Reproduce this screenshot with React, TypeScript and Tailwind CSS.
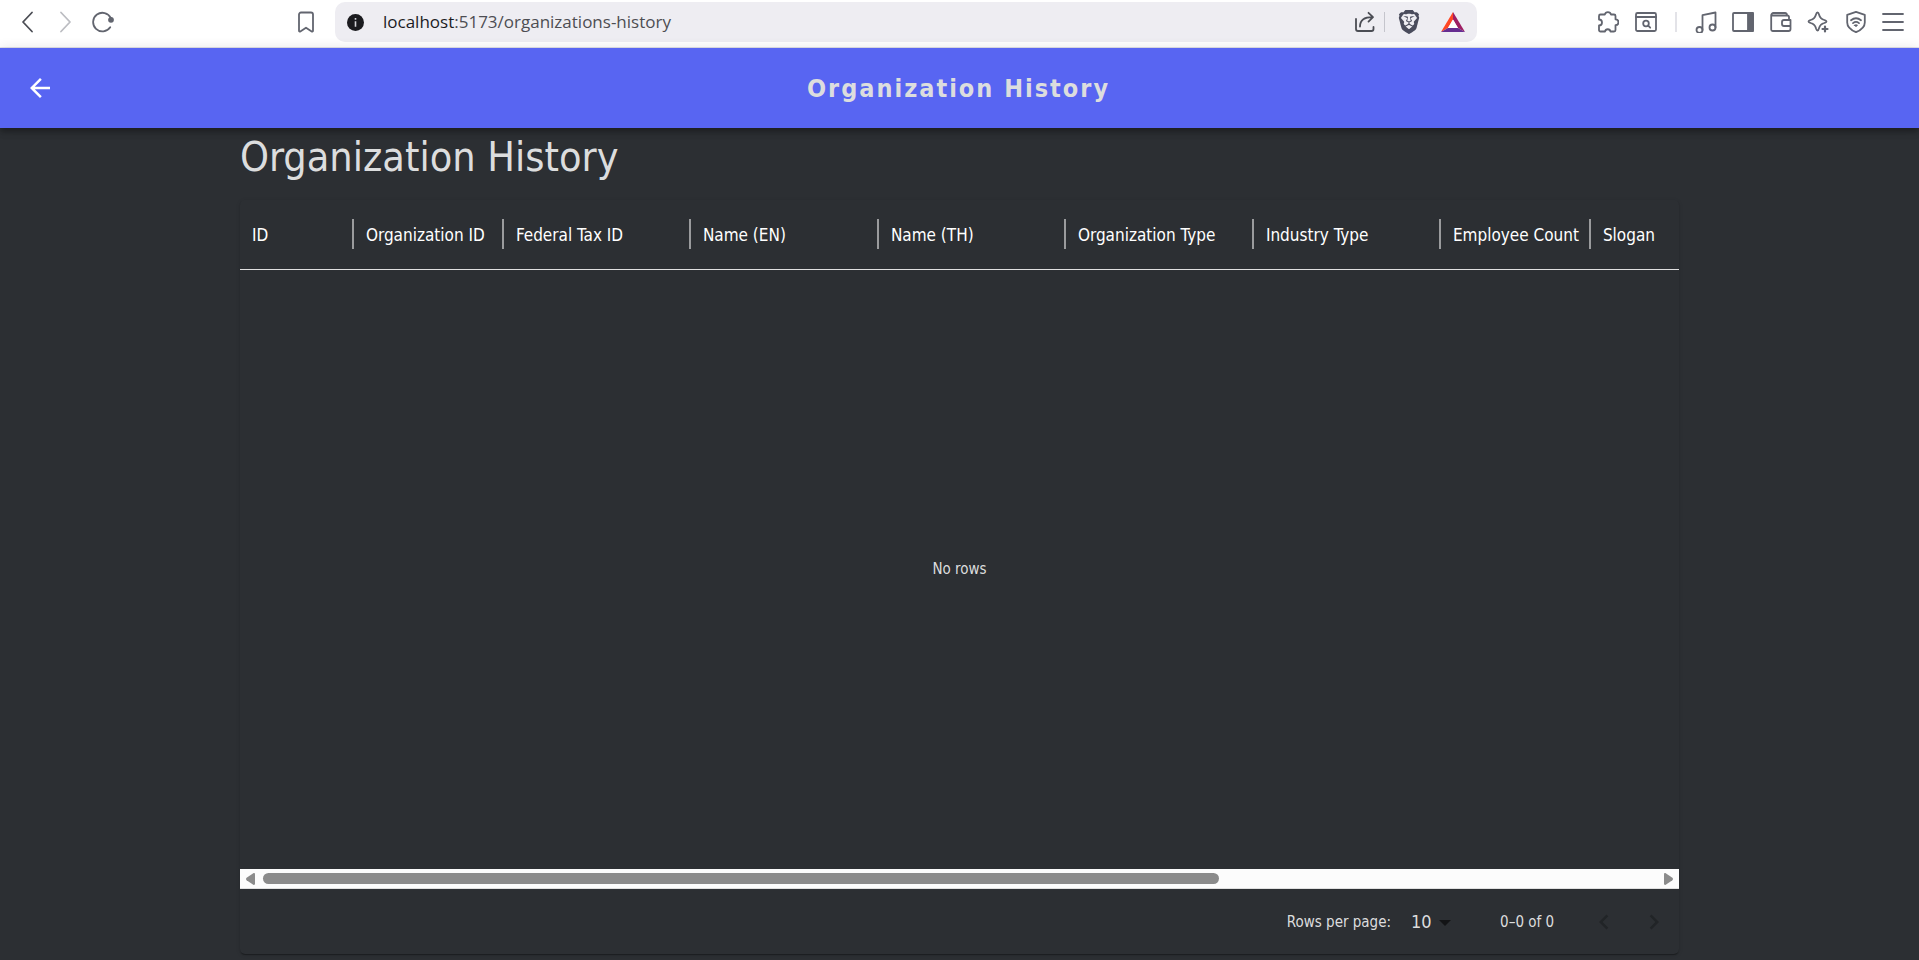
import type { ReactNode } from "react";
import { SiBrave } from "react-icons/si";

const columns = [
  { label: "ID", width: "w-[114px]" },
  { label: "Organization ID", width: "w-[150px]" },
  { label: "Federal Tax ID", width: "w-[187px]" },
  { label: "Name (EN)", width: "w-[188px]" },
  { label: "Name (TH)", width: "w-[187px]" },
  { label: "Organization Type", width: "w-[188px]" },
  { label: "Industry Type", width: "w-[187px]" },
  { label: "Employee Count", width: "w-[150px]" },
  { label: "Slogan", width: "w-auto" },
];

function Line({ children, size = 22 }: { children: ReactNode; size?: number }) {
  return (
    <svg
      width={size}
      height={size}
      viewBox={`0 0 ${size} ${size}`}
      fill="none"
      stroke="currentColor"
      strokeWidth="1.8"
      strokeLinecap="round"
      strokeLinejoin="round"
      aria-hidden="true"
    >
      {children}
    </svg>
  );
}

function IconButton({ label, children }: { label: string; children: ReactNode }) {
  return (
    <button type="button" aria-label={label} className="flex shrink-0 items-center justify-center">
      {children}
    </button>
  );
}

function BrowserBar() {
  return (
    <div className="flex h-12 items-center border-b border-[#e3e3ea] bg-white pr-[15px] pb-[3px] text-[#62656f]">
      <div className="flex w-[335px] shrink-0 items-center gap-4 pl-4">
        <span className="flex text-[#4b4d54]">
          <IconButton label="Back">
            <Line>
              <path d="M16 1.5 7 11l9 9.5" />
            </Line>
          </IconButton>
        </span>
        <span className="flex text-[#bcbdc2]">
          <IconButton label="Forward">
            <Line>
              <path d="m7 1.5 9 9.5-9 9.5" />
            </Line>
          </IconButton>
        </span>
        <IconButton label="Reload">
          <Line>
            <path d="M18.2 16.2A9.3 9.3 0 1 1 18.8 7" />
            <circle cx="19" cy="8.8" r="2" fill="currentColor" />
          </Line>
        </IconButton>
        <span className="ml-auto flex pr-[18px]">
          <IconButton label="Bookmark this page">
            <Line>
              <path d="M4 3.5A2 2 0 0 1 6 1.5h10a2 2 0 0 1 2 2v16.2c0 .8-.7 1.1-1.3.7L11 16.7l-5.7 3.7c-.6.4-1.3.1-1.3-.7z" />
            </Line>
          </IconButton>
        </span>
      </div>

      <div className="flex h-10 min-w-0 flex-1 items-center rounded-[10px] bg-[#eeedf2] px-3">
        <svg width="17" height="17" viewBox="0 0 17 17" className="shrink-0" aria-hidden="true">
          <circle cx="8.5" cy="8.5" r="8.5" fill="#1b1b1f" />
          <path d="M8.5 4v1.7M8.5 7.2v5.6" stroke="#d5d5da" strokeWidth="1.6" />
        </svg>
        <a
          href="#organizations-history"
          className="ml-[19px] min-w-0 flex-1 truncate font-['Open_Sans','Noto_Sans',sans-serif] text-[17px] leading-6 text-[#4d4d52]"
        >
          <span className="text-[#1b1b1f]">localhost</span>:5173/organizations-history
        </a>
        <div className="flex shrink-0 items-center">
          <span className="flex text-[#4b4d54]">
            <IconButton label="Share">
              <Line>
                <path d="M2 8v10a2 2 0 0 0 2 2h13.500a2 2 0 0 0 2-2v-2" />
                <path d="M6 15.500C6 9 10 6.200 18.500 6.200M14.500 1.800l4.500 4.400-4.500 4.400" />
              </Line>
            </IconButton>
          </span>
          <span className="mr-3 ml-2 h-5 w-px bg-[#c5c5cc]" />
          <IconButton label="Brave Shields">
            <SiBrave size={24} className="text-[#4a4c5c]" />
          </IconButton>
          <span className="ml-5 flex">
            <IconButton label="Brave Rewards">
              <svg width="24" height="20" viewBox="0 0 24 20" aria-hidden="true">
                <path d="M12 0 0 20l7-4 5-8.500z" fill="#ff4724" />
                <path d="m12 0 12 20-7-4-5-8.500z" fill="#9e1f63" />
                <path d="M0 20h24l-7-4H7z" fill="#662d91" />
                <path d="m12 7.500 5 8.500H7z" fill="#fff" />
              </svg>
            </IconButton>
          </span>
        </div>
      </div>

      <div className="flex w-[427px] shrink-0 items-center justify-end">
        <div className="flex items-center gap-4">
          <IconButton label="Extensions">
            <Line>
              <path d="M3.500 3.500h4.300a3.200 3.200 0 0 1 6.200 0h3A1.500 1.500 0 0 1 18.500 5v3.300a2.900 2.900 0 0 1 0 5.900V19a1.500 1.500 0 0 1-1.500 1.500h-3.500a2.800 2.800 0 0 0-5.500 0H3.500A1.500 1.500 0 0 1 2 19v-4.500a3 3 0 0 0 0-6V5a1.500 1.500 0 0 1 1.500-1.500z" />
            </Line>
          </IconButton>
          <IconButton label="Search tabs">
            <Line>
              <rect x="1" y="2" width="20" height="18" rx="1.500" />
              <path d="M1 6h20" />
              <circle cx="11" cy="12.500" r="2.800" />
              <path d="m13.200 14.700 2 2" />
            </Line>
          </IconButton>
        </div>
        <span className="mr-[18px] ml-[18px] h-5 w-[2px] bg-[#e3e3e8]" />
        <div className="flex w-[209px] items-center justify-between">
          <IconButton label="Playlist">
            <Line>
              <circle cx="4.500" cy="19" r="3" />
              <circle cx="17.500" cy="16.500" r="3" />
              <path d="M7.500 19V4.200l13-2.700v15" />
            </Line>
          </IconButton>
          <IconButton label="Sidebar">
            <Line>
              <rect x="1" y="2" width="20" height="18" rx="1" />
              <path d="M16 2h5v18h-5z" fill="currentColor" />
            </Line>
          </IconButton>
          <IconButton label="Wallet">
            <Line>
              <path d="M19 9V6a1.500 1.500 0 0 0-1.500-1.500H1.200M1.200 4.500v14A1.500 1.500 0 0 0 2.700 20h15.800a2 2 0 0 0 2-2V9H14a2 2 0 0 0-2 2v2a2 2 0 0 0 2 2h6.500M1.200 4.500A2.300 2.300 0 0 1 3.500 2H15a2 2 0 0 1 2 2.300" />
            </Line>
          </IconButton>
          <IconButton label="Assistant">
            <Line>
              <path d="M10.500 1.500c1 0 1.200.8 1.500 2 .9 3.300 2 4.600 5.300 5.500 1.300.4 2.200.6 2.200 1.500s-1 1.100-2.200 1.500c-3.300.9-4.400 2-5.300 5.300-.3 1.300-.6 2.200-1.500 2.200s-1.100-1-1.500-2.200c-.9-3.300-2-4.400-5.300-5.300-1.200-.4-2.200-.6-2.200-1.500s1-1.100 2.200-1.500C7 8.100 8.100 6.800 9 3.500c.3-1.200.5-2 1.500-2z" />
              <path d="M15 15h6v6h-6z" fill="#fff" stroke="#fff" strokeWidth="1" />
              <path d="M18 15.500v5M15.500 18h5" strokeWidth="2.200" />
            </Line>
          </IconButton>
          <IconButton label="VPN">
            <Line>
              <path d="m11 .9 8.800 3v7.600c0 4.500-4 7.700-8.800 9.700-4.800-2-8.800-5.200-8.800-9.700V3.900z" />
              <path d="M6 9.300c3-2.400 7-2.400 10 0M8 12.100c1.800-1.400 4.200-1.400 6 0" />
              <path d="m9.500 14.300 1.500 1.200 1.500-1.200a2.400 2.400 0 0 0-3 0z" fill="currentColor" strokeWidth="1" />
            </Line>
          </IconButton>
          <IconButton label="Menu">
            <Line>
              <path d="M1 3h20M1 11h20M1 19h20" />
            </Line>
          </IconButton>
        </div>
      </div>
    </div>
  );
}

function AppHeader() {
  return (
    <header className="relative z-10 flex h-20 items-center bg-[#5865f2] px-[25px] shadow-[0_3px_5px_-1px_rgba(0,0,0,0.2),0_5px_6px_0_rgba(0,0,0,0.14),0_1px_12px_0_rgba(0,0,0,0.12)]">
      <button type="button" aria-label="Go back" className="shrink-0 text-white">
        <svg width="30" height="30" viewBox="0 0 24 24" fill="currentColor" aria-hidden="true">
          <path d="M20 11H7.830l5.590-5.590L12 4l-8 8 8 8 1.410-1.410L7.830 13H20v-2z" />
        </svg>
      </button>
      <p className="flex-1 pt-0.5 pr-8 text-center text-[25px] leading-8 font-bold tracking-[2px] text-[#dcddde]">
        Organization History
      </p>
    </header>
  );
}

function Scrollbar() {
  return (
    <div className="flex h-5 items-center border-b border-[#e0e0e0] bg-[#fcfcfc] px-[6px] text-[#8b8b8b]">
      <button type="button" aria-label="Scroll left">
        <svg width="9" height="12" viewBox="0 0 9 12" fill="currentColor" aria-hidden="true">
          <path d="M9 1.200v9.600c0 1-.9 1.400-1.700.9L.6 7.200C-.1 6.700-.1 5.300.6 4.800L7.300.3C8.100-.2 9 .2 9 1.200z" />
        </svg>
      </button>
      <div className="mx-2 flex-1">
        <div className="h-[11px] w-[68.600%] rounded-full bg-[#8b8b8b]" />
      </div>
      <button type="button" aria-label="Scroll right">
        <svg width="9" height="12" viewBox="0 0 9 12" fill="currentColor" aria-hidden="true">
          <path d="M0 1.200v9.600c0 1 .9 1.400 1.700.9l6.700-4.500c.7-.5.7-1.900 0-2.400L1.700.3C.9-.2 0 .2 0 1.200z" />
        </svg>
      </button>
    </div>
  );
}

function Pagination() {
  return (
    <div className="flex h-[65px] items-center justify-end pr-2.5 text-[15px] text-[#dcddde]">
      <label htmlFor="page-size" className="pt-0.5">
        Rows per page:
      </label>
      <div className="relative ml-[18px] flex items-center">
        <select
          id="page-size"
          defaultValue="10"
          className="w-[46px] appearance-none bg-transparent pl-[2px] text-[18px] leading-6"
        >
          <option value="10">10</option>
          <option value="25">25</option>
          <option value="50">50</option>
        </select>
        <svg
          width="12"
          height="6"
          viewBox="0 0 12 6"
          className="pointer-events-none absolute right-1 mt-0.5"
          aria-hidden="true"
        >
          <path d="M0 0h12L6 6z" fill="#131416" />
        </svg>
      </div>
      <span className="ml-[45px] pt-0.5">0–0 of 0</span>
      <div className="ml-[35px] flex gap-5 text-[#212427]">
        <button type="button" disabled aria-label="Previous page">
          <svg width="30" height="30" viewBox="0 0 24 24" fill="currentColor" aria-hidden="true">
            <path d="M15.410 16.590 10.830 12l4.580-4.590L14 6l-6 6 6 6z" />
          </svg>
        </button>
        <button type="button" disabled aria-label="Next page">
          <svg width="30" height="30" viewBox="0 0 24 24" fill="currentColor" aria-hidden="true">
            <path d="M8.590 16.590 13.170 12 8.590 7.410 10 6l6 6-6 6z" />
          </svg>
        </button>
      </div>
    </div>
  );
}

export default function App() {
  return (
    <div className="min-h-screen bg-[#2c2f33] font-['DejaVu_Sans_Condensed','DejaVu_Sans',sans-serif]">
      <BrowserBar />
      <AppHeader />
      <main className="px-[12.500%] pb-[6px]">
        <h1 className="pt-0.5 pb-4 text-[41px] leading-[54px] text-[#dcddde]">Organization History</h1>
        <section
          aria-label="Organization history records"
          className="rounded-[5px] shadow-[0_2px_1px_-1px_rgba(0,0,0,0.2),0_1px_1px_0_rgba(0,0,0,0.14),0_1px_4px_0_rgba(0,0,0,0.12)]"
        >
          <table className="w-full table-fixed border-collapse">
            <thead>
              <tr className="h-[69px] border-b border-[#e0e0e0]">
                {columns.map((column, index) => (
                  <th key={column.label} scope="col" className={`${column.width} p-0 text-left font-normal`}>
                    <div
                      className={`flex h-[30px] items-center pt-[3px] pl-3 text-[17px] whitespace-nowrap text-white ${
                        index < columns.length - 1 ? "border-r-2 border-[#9a9b9d]" : ""
                      }`}
                    >
                      {column.label}
                    </div>
                  </th>
                ))}
              </tr>
            </thead>
            <tbody>
              <tr>
                <td
                  colSpan={columns.length}
                  className="h-[600px] p-0 text-center align-middle text-[15px] text-[#dcddde]"
                >
                  No rows
                </td>
              </tr>
            </tbody>
          </table>
          <Scrollbar />
          <Pagination />
        </section>
      </main>
    </div>
  );
}
